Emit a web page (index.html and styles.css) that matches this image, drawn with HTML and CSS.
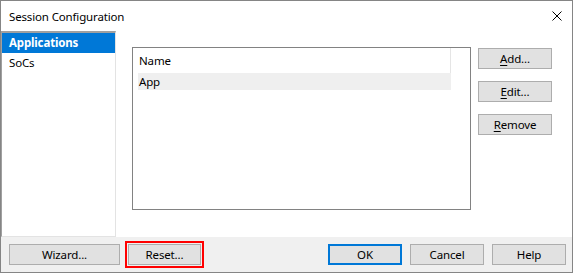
FILE: index.html
```html
<!DOCTYPE html>
<html>
<head>
<meta charset="utf-8">
<link rel="stylesheet" href="styles.css">
</head>
<body>
<div class="window">
  <div class="titlebar">
    <span class="title">Session Configuration</span>
    <svg class="close" width="10" height="10" viewBox="0 0 10 10"><path d="M0.5 0.5 L9.5 9.5 M9.5 0.5 L0.5 9.5" stroke="#000" stroke-width="1" fill="none"/></svg>
  </div>
  <div class="main">
    <div class="sidebar">
      <div class="nav-item selected">Applications</div>
      <div class="nav-item">SoCs</div>
    </div>
    <div class="content">
      <div class="list">
        <div class="list-header">Name</div>
        <div class="list-row">App</div>
      </div>
      <div class="side-buttons">
        <button class="btn"><u>A</u>dd...</button>
        <button class="btn"><u>E</u>dit...</button>
        <button class="btn"><u>R</u>emove</button>
      </div>
    </div>
  </div>
  <div class="footer">
    <button class="btn wide">Wizard...</button>
    <button class="btn highlighted">Reset...</button>
    <div class="spacer"></div>
    <button class="btn default">OK</button>
    <button class="btn">Cancel</button>
    <button class="btn">Help</button>
  </div>
</div>
</body>
</html>
```
FILE: styles.css
```css
* { box-sizing: border-box; }
html, body { margin: 0; padding: 0; background: #fff; }
body {
  font-family: "Noto Sans", "DejaVu Sans", sans-serif;
  font-size: 11.5px;
  letter-spacing: -0.15px;
  color: #000;
}
.window {
  width: 573px;
  height: 273px;
  border: 1px solid #858585;
  background: #fff;
  display: flex;
  flex-direction: column;
  overflow: hidden;
}
.titlebar {
  height: 30px;
  flex: none;
  display: flex;
  align-items: center;
  padding-left: 8px;
  padding-right: 10px;
}
.title { flex: 1; line-height: 1; padding-top: 1px; }
.close { flex: none; }
.main {
  flex: 1;
  display: flex;
  min-height: 0;
}
.sidebar {
  width: 115px;
  flex: none;
  border-top: 2px solid #a0a0a0;
  border-left: 1px solid #a0a0a0;
  border-right: 1px solid #e3e3e3;
  border-bottom: 1px solid #e3e3e3;
  background: #fff;
}
.nav-item {
  height: 20px;
  line-height: 20px;
  padding-left: 7px;
}
.nav-item.selected {
  background: #0078d7;
  color: #fff;
  font-weight: bold;
}
.content {
  flex: 1;
  display: flex;
  align-items: flex-start;
  padding: 16px 0 0 16px;
  gap: 7px;
}
.list {
  width: 339px;
  height: 163px;
  border: 1px solid #828282;
  padding: 0 19px 0 5px;
  flex: none;
}
.list-header {
  height: 25px;
  line-height: 26px;
  padding-left: 1px;
  border-right: 1px solid #e5e5e5;
}
.list-row {
  height: 17px;
  line-height: 18px;
  padding-left: 1px;
  background: #efefef;
}
.side-buttons {
  display: flex;
  flex-direction: column;
  gap: 12px;
  padding-top: 1px;
}
.btn {
  font-family: inherit;
  font-size: 11.5px;
  letter-spacing: -0.15px;
  color: #000;
  width: 74px;
  height: 21px;
  padding: 0;
  background: #e1e1e1;
  border: 1px solid #adadad;
  border-radius: 0;
  line-height: 19px;
  flex: none;
}
.btn u { text-decoration: underline; text-underline-offset: 2px; }
.footer {
  height: 35px;
  flex: none;
  background: #f0f0f0;
  display: flex;
  align-items: center;
  padding: 0 6px 0 8px;
  gap: 8px;
}
.btn.wide { width: 111px; }
.btn.highlighted {
  width: 73px;
  outline: 2px solid #ff0000;
  outline-offset: 1px;
}
.spacer { flex: 1; }
.btn.default {
  border: 2px solid #0078d7;
  line-height: 17px;
}
```
